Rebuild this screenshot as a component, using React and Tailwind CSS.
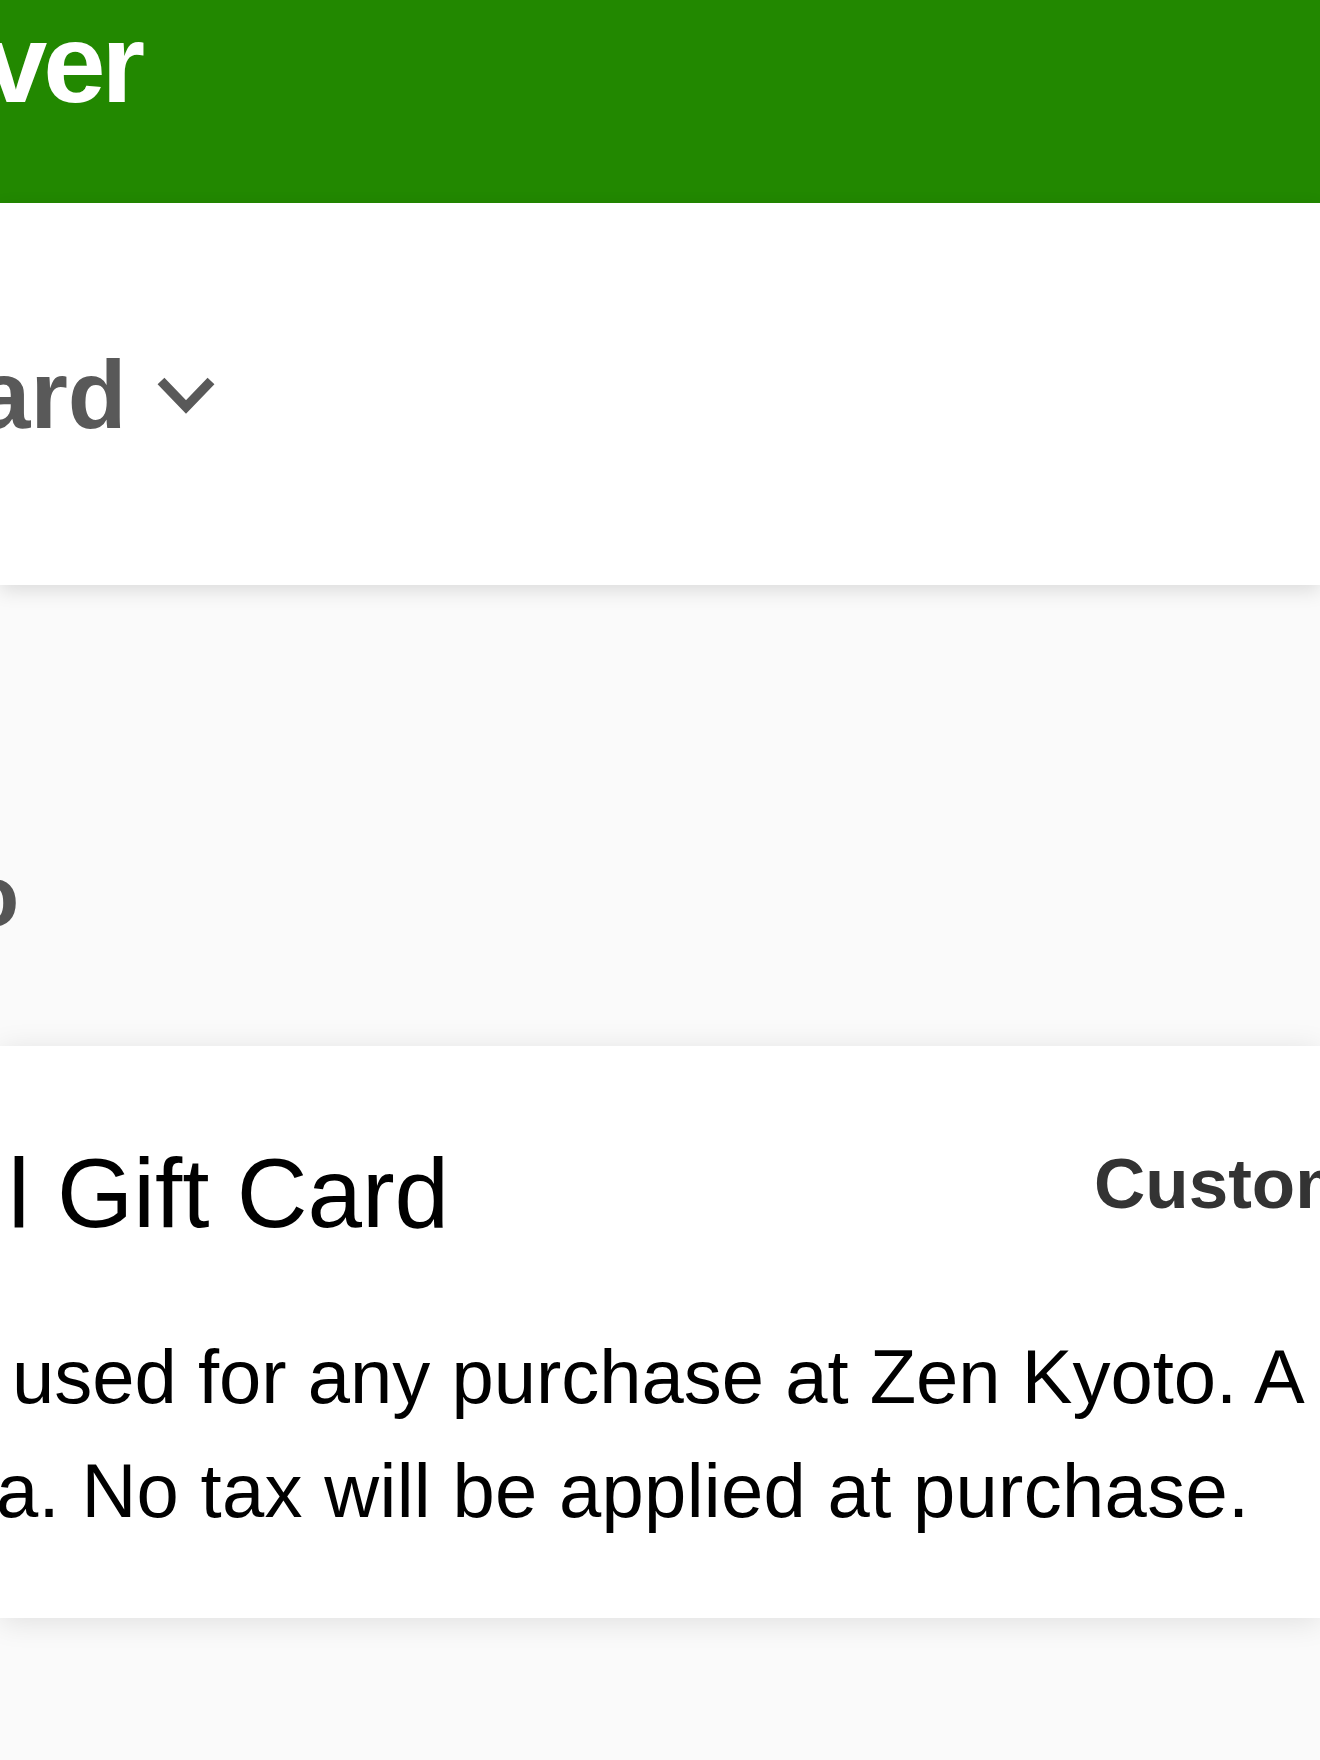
export default function App() {
  return (
    <div className="w-[1320px] min-h-[1760px] overflow-hidden bg-[#fafafa] font-['Liberation_Sans',Arial,sans-serif]">
      {/* top bar */}
      <header className="h-[203px] bg-[#228800] pt-[8px] whitespace-nowrap">
        <div className="-ml-[15px] text-[112px] font-bold leading-none tracking-[-4px] text-white">ver</div>
      </header>

      {/* title row */}
      <section className="relative z-10 bg-white pt-[144px] pb-[142px] shadow-[0_6px_18px_rgba(0,0,0,0.12)] whitespace-nowrap">
        <div className="flex items-start">
          <span className="-ml-[23px] text-[96px] font-bold leading-none text-[#595959]">ard</span>
          <svg className="ml-[31px] mt-[30px]" width="58" height="38" viewBox="0 0 58 38" fill="none">
            <path d="M4 4 L29 30 L54 4" stroke="#595959" strokeWidth="9.5" />
          </svg>
        </div>
      </section>

      {/* gray band */}
      <section className="pt-[267px] pb-[107px] whitespace-nowrap">
        <div className="-ml-[34px] text-[87px] font-bold leading-none text-[#555555]">o</div>
      </section>

      {/* gift card */}
      <section className="relative z-10 bg-white pt-[98px] pb-[70px] shadow-[0_4px_28px_rgba(0,0,0,0.11)] whitespace-nowrap">
        <div className="flex items-start">
          <div className="w-[1094px] shrink-0 pl-[8px] text-[98px] leading-none text-black">l Gift Card</div>
          <span className="mt-[4px] text-[71px] font-bold leading-none text-[#333333]">Custom Amount</span>
        </div>
        <div className="mt-[78px] text-[76px] leading-[114px] text-black">
          <div className="pl-[12px]">used for any purchase at Zen Kyoto. A gift card</div>
          <div className="-ml-[4px] tracking-[0.3px]">a. No tax will be applied at purchase.</div>
        </div>
      </section>
    </div>
  );
}
